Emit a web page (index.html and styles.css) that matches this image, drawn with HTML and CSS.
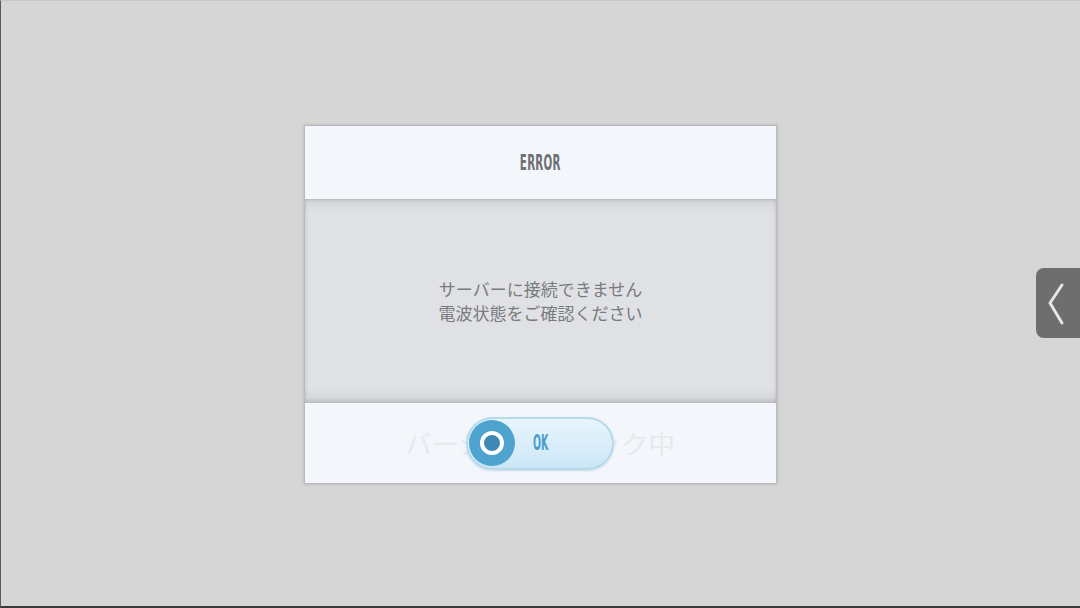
FILE: index.html
```html
<!DOCTYPE html>
<html lang="ja">
<head>
<meta charset="utf-8">
<link rel="stylesheet" href="styles.css">
</head>
<body>
<div class="screen">
  <div class="dialog">
    <div class="dlg-head"><span class="title">ERROR</span></div>
    <div class="dlg-body">
      <p class="msg">サーバーに接続できません<br>電波状態をご確認ください</p>
    </div>
    <div class="dlg-foot">
      <span class="ghost">バージョンチェック中</span>
      <button class="ok-btn">
        <span class="ok-icon"><span class="ok-ring"></span></span>
        <span class="ok-label">OK</span>
      </button>
    </div>
  </div>
  <div class="side-tab">
    <svg width="44" height="70" viewBox="0 0 44 70"><polyline points="26,17 14,35 26,55" fill="none" stroke="#e6e6e6" stroke-width="3" stroke-linecap="round" stroke-linejoin="round"/></svg>
  </div>
</div>
</body>
</html>
```

FILE: styles.css
```css
html, body {
  margin: 0;
  padding: 0;
  width: 1080px;
  height: 608px;
  overflow: hidden;
}
body {
  background: #2c2c2c;
  font-family: "Noto Sans CJK JP", "Noto Sans", sans-serif;
}
.screen {
  position: relative;
  box-sizing: border-box;
  width: 1080px;
  height: 608px;
  background: #d6d6d6;
  border-left: 1px solid #5a5a5a;
  border-bottom: 2px solid #3a3a3a;
  border-top: 1px solid #c8c8c8;
  display: flex;
  align-items: center;
  justify-content: center;
}
.dialog {
  width: 471px;
  border: 1px solid #b8babd;
  box-shadow: 0 0 3px rgba(0,0,0,0.18);
  background: #f3f6fb;
  display: flex;
  flex-direction: column;
  margin-top: 1px;
}
.dlg-head {
  height: 73px;
  display: flex;
  align-items: center;
  justify-content: center;
}
.title {
  display: inline-block;
  font-family: "DejaVu Sans Condensed", "DejaVu Sans", sans-serif;
  font-weight: bold;
  font-size: 22px;
  color: #6e7074;
  transform: scaleX(0.52);
  letter-spacing: 0.5px;
}
.dlg-body {
  height: 204px;
  background: linear-gradient(to bottom, #c0c2c5 0px, #d3d5d8 3px, #dbdde0 8px, #dfe1e4 14px, #dfe1e4 190px, #d5d7da 199px, #bcbec1 204px);
  box-shadow: inset 2px 0 2px rgba(0,0,0,0.06), inset -2px 0 2px rgba(0,0,0,0.06);
  display: flex;
  align-items: center;
  justify-content: center;
}
.msg {
  margin: 0;
  font-size: 17px;
  line-height: 24px;
  color: #7a7b7e;
  text-align: center;
}
.dlg-foot {
  position: relative;
  height: 80px;
  display: flex;
  align-items: center;
  justify-content: center;
}
.ghost {
  position: absolute;
  left: 0;
  right: 0;
  top: 22px;
  text-align: center;
  font-size: 26.5px;
  line-height: 36px;
  color: #e6e9ee;
  letter-spacing: 0.6px;
}
.ok-btn {
  position: relative;
  box-sizing: border-box;
  width: 148px;
  height: 53px;
  padding: 0;
  border: 2px solid #b7d9ec;
  border-radius: 27px;
  background: linear-gradient(to bottom, #e6f4fc, #d8edf9 60%, #cbe6f5);
  box-shadow: 0 1px 2px rgba(90,140,170,0.25);
  display: flex;
  align-items: center;
  margin-left: -1px;
  margin-top: 1px;
}
.ok-icon {
  width: 46px;
  height: 46px;
  border-radius: 50%;
  background: #4ea3cf;
  margin-left: 1px;
  display: flex;
  align-items: center;
  justify-content: center;
}
.ok-ring {
  box-sizing: border-box;
  width: 24px;
  height: 24px;
  border-radius: 50%;
  border: 4px solid #ffffff;
  background: #3f88b4;
}
.ok-label {
  display: inline-block;
  margin-left: 18px;
  font-family: "DejaVu Sans Condensed", "DejaVu Sans", sans-serif;
  font-weight: bold;
  font-size: 21px;
  color: #4b9dcb;
  transform: scaleX(0.5);
  transform-origin: left center;
}
.side-tab {
  position: absolute;
  right: 0;
  top: 267px;
  width: 44px;
  height: 70px;
  background: #6e6e6e;
  border-radius: 8px 0 0 8px;
}
.side-tab svg {
  display: block;
}
```
